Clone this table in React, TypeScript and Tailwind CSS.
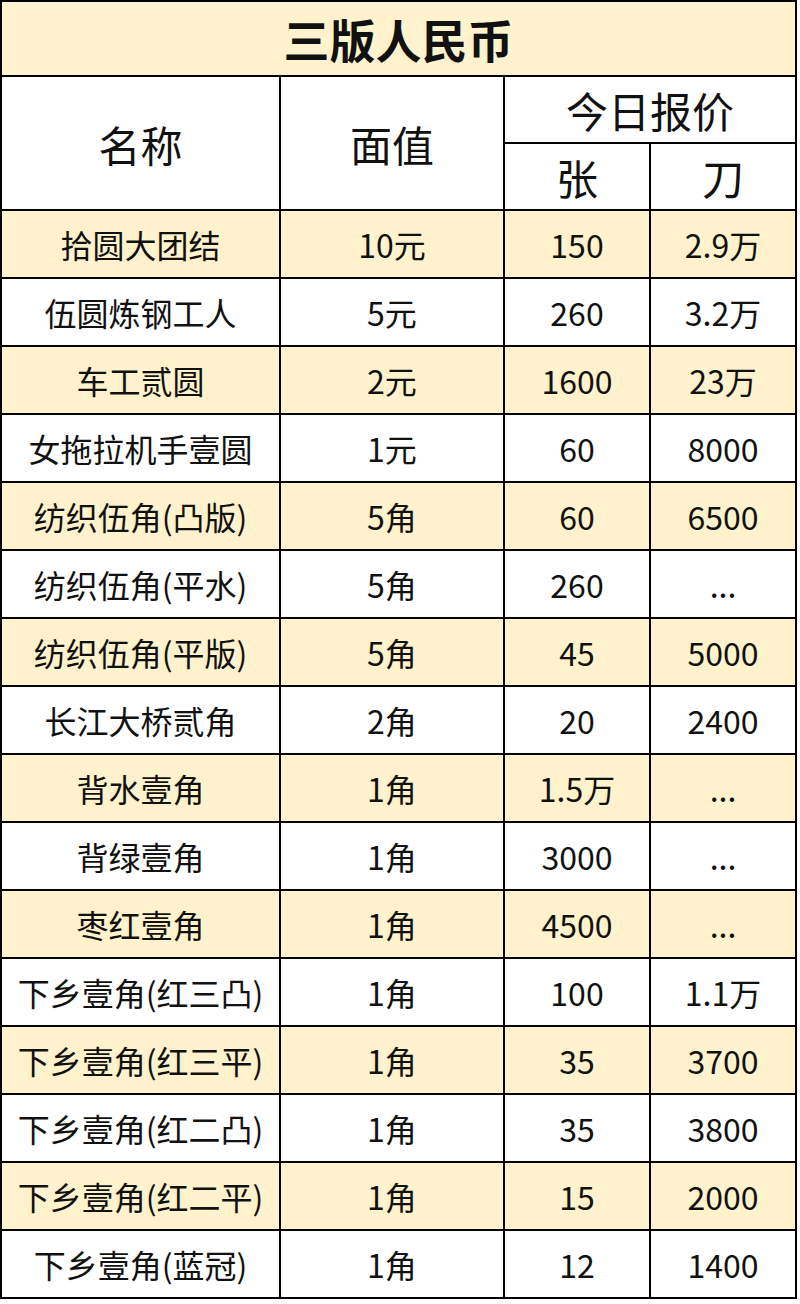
const FONT = { fontFamily: '"Noto Sans CJK SC", "Noto Sans", sans-serif' };

interface Row {
    name: string;
    face: string;
    sheet: string;
    stack: string;
}

const ROWS: Row[] = [
    { name: "拾圆大团结", face: "10元", sheet: "150", stack: "2.9万" },
    { name: "伍圆炼钢工人", face: "5元", sheet: "260", stack: "3.2万" },
    { name: "车工贰圆", face: "2元", sheet: "1600", stack: "23万" },
    { name: "女拖拉机手壹圆", face: "1元", sheet: "60", stack: "8000" },
    { name: "纺织伍角(凸版)", face: "5角", sheet: "60", stack: "6500" },
    { name: "纺织伍角(平水)", face: "5角", sheet: "260", stack: "..." },
    { name: "纺织伍角(平版)", face: "5角", sheet: "45", stack: "5000" },
    { name: "长江大桥贰角", face: "2角", sheet: "20", stack: "2400" },
    { name: "背水壹角", face: "1角", sheet: "1.5万", stack: "..." },
    { name: "背绿壹角", face: "1角", sheet: "3000", stack: "..." },
    { name: "枣红壹角", face: "1角", sheet: "4500", stack: "..." },
    { name: "下乡壹角(红三凸)", face: "1角", sheet: "100", stack: "1.1万" },
    { name: "下乡壹角(红三平)", face: "1角", sheet: "35", stack: "3700" },
    { name: "下乡壹角(红二凸)", face: "1角", sheet: "35", stack: "3800" },
    { name: "下乡壹角(红二平)", face: "1角", sheet: "15", stack: "2000" },
    { name: "下乡壹角(蓝冠)", face: "1角", sheet: "12", stack: "1400" },
];

const Cell = ({ text, yellow }: { text: string; yellow: boolean }) => (
    <div
        className={`h-[66px] flex items-center justify-center text-[32px] text-[#111] whitespace-nowrap ${
            yellow ? "bg-[#fff2cc]" : "bg-white"
        }`}
    >
        {text}
    </div>
);

export default function App() {
    return (
        <div className="w-[800px] h-[1304px] bg-white" style={FONT}>
            <div className="w-[797px] bg-black p-[2px] grid grid-cols-[277px_222px_144px_144px] gap-[2px]">
                <div className="col-span-4 h-[73px] bg-[#fff2cc] flex items-center justify-center text-[46px] font-bold text-[#111]">
                    三版人民币
                </div>

                <div className="row-span-2 bg-white flex items-center justify-center text-[42px] text-[#111]">
                    名称
                </div>
                <div className="row-span-2 bg-white flex items-center justify-center text-[42px] text-[#111]">
                    面值
                </div>
                <div className="col-span-2 h-[65px] bg-white flex items-center justify-center text-[42px] text-[#111]">
                    今日报价
                </div>
                <div className="h-[65px] bg-white flex items-center justify-center text-[42px] text-[#111]">张</div>
                <div className="h-[65px] bg-white flex items-center justify-center text-[42px] text-[#111]">刀</div>

                {ROWS.map((row, i) => {
                    const yellow = i % 2 === 0;
                    return [
                        <Cell key={`${i}-n`} text={row.name} yellow={yellow} />,
                        <Cell key={`${i}-f`} text={row.face} yellow={yellow} />,
                        <Cell key={`${i}-s`} text={row.sheet} yellow={yellow} />,
                        <Cell key={`${i}-t`} text={row.stack} yellow={yellow} />,
                    ];
                })}
            </div>
        </div>
    );
}
